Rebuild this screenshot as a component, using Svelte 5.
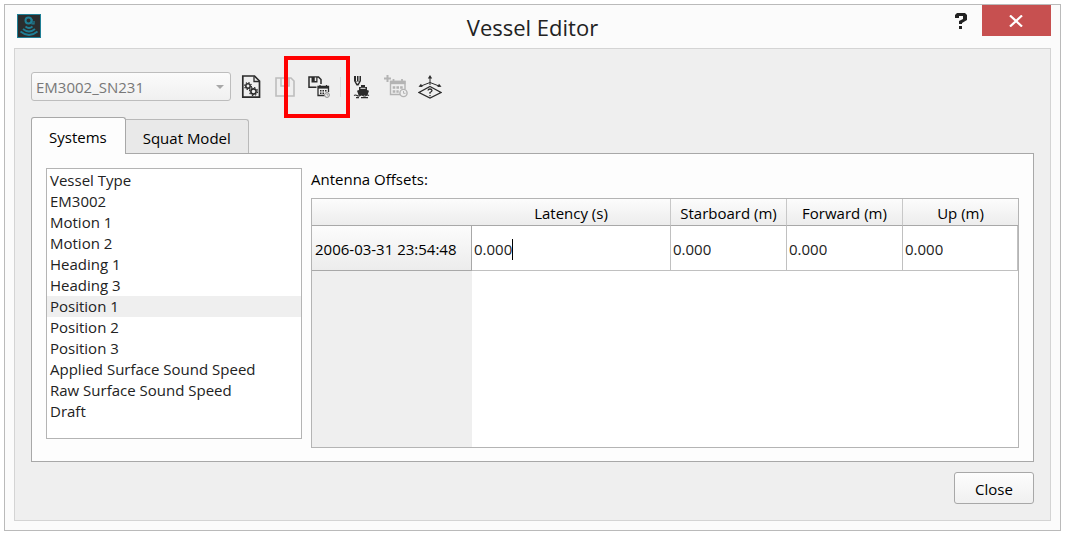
<script>
	const systems = [
		'Vessel Type',
		'EM3002',
		'Motion 1',
		'Motion 2',
		'Heading 1',
		'Heading 3',
		'Position 1',
		'Position 2',
		'Position 3',
		'Applied Surface Sound Speed',
		'Raw Surface Sound Speed',
		'Draft'
	];
	const tabs = ['Systems', 'Squat Model'];
	const columns = ['Latency (s)', 'Starboard (m)', 'Forward (m)', 'Up (m)'];

	let selected = $state('Position 1');
	let activeTab = $state('Systems');
	let editing = $state(0);
	let rows = $state([{ time: '2006-03-31 23:54:48', values: ['0.000', '0.000', '0.000', '0.000'] }]);
</script>

<div class="window">
	<header class="titlebar">
		<svg class="logo" width="24" height="24" viewBox="0 0 24 24" fill="none" stroke="#1f7f96">
			<rect x="0.5" y="0.5" width="23" height="23" fill="#2a2d2e" />
			<circle cx="11.5" cy="6.5" r="3" stroke-width="2" />
			<path d="M15 5v5h2V7" stroke-width="1.2" />
			<path d="M8.5 12.5q3.5 3 7 0M6 15q6 5 12 0M3.5 17.5q8.5 7 17 0" stroke-width="1.8" />
		</svg>
		<h1>Vessel Editor</h1>
		<div class="window-buttons">
			<button class="help" aria-label="Help">
				<svg width="12" height="16" viewBox="0 0 12 16" fill="#222">
					<path d="M2 0h8l2 2v5L7 10v1H4V8l4-2V3H4v2H0V2zM4 13h3v3H4z" />
				</svg>
			</button>
			<button class="close-window" aria-label="Close window">
				<svg width="14" height="12" viewBox="0 0 14 12" fill="none" stroke="#fff" stroke-width="2.2">
					<path d="M1 .5l12 11M13 .5l-12 11" />
				</svg>
			</button>
		</div>
	</header>

	<main>
		<div class="toolbar">
			<div class="combo">
				<select aria-label="Vessel configuration" disabled>
					<option>EM3002_SN231</option>
				</select>
			</div>

			<button class="tool" aria-label="Configuration settings">
				<svg width="20" height="24" viewBox="0 0 20 24" fill="none" stroke="#2b2b2b">
					<path d="M1.8 1h11.7l5 5v16.2H1.8z" stroke-width="1.7" />
					<path d="M13 1.5v5h5" stroke-width="1.3" />
					<circle cx="7" cy="11" r="2.2" stroke-width="1.5" />
					<circle cx="7" cy="11" r="3.4" stroke-width="1.2" stroke-dasharray="1.3 1.37" />
					<circle cx="12.5" cy="16.5" r="2.6" stroke-width="1.6" />
					<circle cx="12.5" cy="16.5" r="4" stroke-width="1.2" stroke-dasharray="1.5 1.64" />
				</svg>
			</button>

			<button class="tool" aria-label="Save" disabled>
				<svg width="20" height="20" viewBox="0 0 20 20" fill="none" stroke="#bdbdbd">
					<path d="M1 1h15l3 3v15H1z" stroke-width="1.6" />
					<path d="M6 1v8h8V1" stroke-width="1.5" />
					<path d="M11.5 2v5" stroke-width="2.5" />
				</svg>
			</button>

			<button class="tool marked" aria-label="Save as time entry">
				<svg width="22" height="22" viewBox="0 0 22 22" fill="none" stroke="#2b2b2b">
					<path d="M8.5 11.2H1V1h9.500l2.500 2.500V8" stroke-width="1.5" />
					<path d="M3.500 1h6v5.500h-6z" fill="#2b2b2b" stroke="none" />
					<path d="M7.500 1.5v3.500" stroke="#efefef" stroke-width="1.5" />
					<path d="M16.500 19.500H10V10.500h10.500V16" stroke-width="1.3" />
					<path d="M10 11.500h10.500" stroke-width="2.2" />
					<path d="M12 9v2M18.500 9v2" stroke-width="1.2" />
					<path d="M12 14.800h6.500M12 17.300h4.500" stroke-width="1.6" stroke-dasharray="1.5 1" />
					<circle cx="19" cy="19" r="2.400" fill="#efefef" stroke="#888" />
					<path d="M19 17.500v1.500h1.300" stroke="#888" stroke-width=".8" />
				</svg>
			</button>

			<span class="separator"></span>

			<button class="tool" aria-label="Edit vessel shape">
				<svg width="18" height="24" viewBox="0 0 18 24" fill="#2b2b2b">
					<path d="M1 1h2v5H1zM4 1h1.500v5H4zM6.500 1h1.500v5H6.500zM1 6h7L5.500 10.500h-2z" />
					<path d="M2.600 6.500h3.800L4.500 9z" fill="#efefef" />
					<path d="M8 10h4v2h2v3l2 .7-1.500 4.300H5.500L4 15.700l2-.7v-3h2z" />
					<path d="M7.500 13.300h5" stroke="#efefef" stroke-width="1" />
					<path d="M1 20.500q1.500-1 3 0t3 0 3 0 3 0 3 0M3 22.700h3M8 22.700h7" fill="none" stroke="#2b2b2b" stroke-width="1.2" />
				</svg>
			</button>

			<button class="tool" aria-label="Add time entry" disabled>
				<svg width="24" height="23" viewBox="0 0 24 23" fill="none" stroke="#b4b4b4">
					<path d="M3.500 0v7M0 3.500h7" stroke-width="2" />
					<path d="M16 19.500H6.500V6.500h14.500V14" stroke-width="1.4" />
					<path d="M6 7.500h15.500" stroke-width="3.4" />
					<path d="M9.500 4v3M18 4v3" stroke-width="1.8" />
					<path d="M8.700 12.500h10M8.700 16.500h6" stroke-width="2.6" stroke-dasharray="2.6 1.1" />
					<circle cx="19.500" cy="18" r="3.600" fill="#efefef" stroke-width="1.4" />
					<path d="M19.500 16v2.300h2" />
				</svg>
			</button>

			<button class="tool" aria-label="Reference frame">
				<svg width="24" height="24" viewBox="0 0 24 24" fill="none" stroke="#2b2b2b">
					<path d="M12 11.500L23 17.500L12 23L1 17.500z" stroke-width="1.2" />
					<path d="M12 10V2M12 7.500L2.500 11.200M12 7.500l9.500 3.700" />
					<path d="M12 0l2.200 3.500H9.800zM.5 11.800L3 8.800l1.700 3.200zM23.500 11.800L21 8.800l-1.700 3.200z" fill="#2b2b2b" stroke="none" />
					<path d="M10 15.500q.2-1.500 2-1.500t2 1.500q0 1-2 2v1.300M12 20v1.200" stroke-width="1.3" />
				</svg>
			</button>
		</div>

		<div class="tabs" role="tablist">
			{#each tabs as tab}
				<button
					class="tab"
					class:active={tab === activeTab}
					role="tab"
					aria-selected={tab === activeTab}
					onclick={() => (activeTab = tab)}>{tab}</button
				>
			{/each}
		</div>

		<div class="tab-panel" role="tabpanel">
			{#if activeTab === 'Systems'}
				<ul class="systems">
					{#each systems as name}
						<li>
							<button class:selected={name === selected} onclick={() => (selected = name)}>{name}</button>
						</li>
					{/each}
				</ul>

				<section class="offsets">
					<h2 id="offsets-title">Antenna Offsets:</h2>
					<div class="table-view">
						<table aria-labelledby="offsets-title">
							<thead>
								<tr>
									<td class="corner"></td>
									{#each columns as column}
										<th scope="col">{column}</th>
									{/each}
								</tr>
							</thead>
							<tbody>
								{#each rows as row}
									<tr>
										<th scope="row">{row.time}</th>
										{#each row.values as value, i}
											<td>
												<div class="cell">
													<input
														aria-label={columns[i]}
														bind:value={row.values[i]}
														onfocus={() => (editing = -1)}
														onblur={() => (editing = i)}
													/>
													{#if i === editing}<span class="caret"></span>{/if}
												</div>
											</td>
										{/each}
									</tr>
								{/each}
							</tbody>
						</table>
					</div>
				</section>
			{/if}
		</div>

		<footer>
			<button class="close">Close</button>
		</footer>
	</main>
</div>

<style>
	:global(body) {
		margin: 0;
		background: #fff;
	}

	.window,
	.window * {
		box-sizing: border-box;
	}

	.window {
		display: flex;
		flex-direction: column;
		min-height: calc(100vh - 7px);
		margin: 4px 4px 3px;
		padding: 0 9px 9px;
		border: 1px solid #bababa;
		background: #fbfbfb;
		color: #000;
		font-family: 'Segoe UI', 'Open Sans', 'Noto Sans', sans-serif;
		font-size: 15px;
		line-height: 21px;
	}

	button,
	input,
	select {
		font: inherit;
		color: inherit;
	}

	.titlebar {
		display: grid;
		grid-template-columns: 1fr auto 1fr;
		height: 43px;
	}

	.logo {
		margin: 9px 0 0 3px;
	}

	h1 {
		margin: 0;
		color: #222;
		font-size: 22px;
		font-weight: 400;
		line-height: 44px;
	}

	.window-buttons {
		display: flex;
		justify-content: flex-end;
		align-items: flex-start;
	}

	.window-buttons button {
		display: flex;
		align-items: center;
		justify-content: center;
		height: 31px;
		padding: 0;
		border: none;
		background: none;
	}

	.window-buttons .help {
		width: 42px;
	}

	.window-buttons .close-window {
		width: 69px;
		padding-right: 2px;
		background: #c75050;
	}

	main {
		display: flex;
		flex: 1;
		flex-direction: column;
		padding: 23px 16px 16px;
		border: 1px solid #d4d4d4;
		background: #efefef;
	}

	.toolbar {
		display: flex;
		align-items: center;
		height: 29px;
		margin-bottom: 16px;
	}

	.combo {
		position: relative;
		width: 200px;
		margin-right: 5px;
	}

	.combo::after {
		content: '';
		position: absolute;
		top: 13px;
		right: 7px;
		border: 4px solid transparent;
		border-top-color: #a8a8a8;
		border-bottom: none;
	}

	select {
		appearance: none;
		display: block;
		width: 100%;
		height: 29px;
		padding: 2px 4px 0;
		border: 1px solid #bdbdbd;
		border-radius: 3px;
		background: linear-gradient(#fbfbfb, #f0f0f0);
		color: #787878;
		opacity: 1;
	}

	.tool {
		position: relative;
		display: flex;
		align-items: center;
		justify-content: center;
		width: 30px;
		height: 28px;
		margin-right: 4px;
		padding: 0;
		border: none;
		background: none;
	}

	/* highlight drawn over the neighbouring icons */
	.marked::after {
		content: '';
		position: absolute;
		z-index: 1;
		inset: -17px -16px -17px -20px;
		border: 4px solid #f00;
		pointer-events: none;
	}

	.separator {
		width: 1px;
		height: 20px;
		margin: 0 6px 0 2px;
		background: #dcdcdc;
	}

	.tabs {
		display: flex;
		align-items: flex-end;
	}

	.tab {
		height: 34px;
		padding: 4px 17px 0;
		border: 1px solid #b9b9b9;
		border-bottom: none;
		border-left: none;
		border-radius: 0 3px 0 0;
		background: #e9e9e9;
	}

	.tab.active {
		position: relative;
		height: 37px;
		margin-bottom: -1px;
		padding: 2px 18px 0 17px;
		border: 1px solid #a8a8a8;
		border-bottom: none;
		border-radius: 3px 3px 0 0;
		background: #fdfdfd;
	}

	.tab-panel {
		display: flex;
		flex: 1;
		gap: 9px;
		padding: 14px 14px 13px;
		border: 1px solid #a8a8a8;
		background: #fdfdfd;
	}

	.systems {
		flex: 0 0 256px;
		align-self: flex-start;
		height: 271px;
		margin: 0;
		padding: 1px 0;
		border: 1px solid #b4b4b4;
		background: #fff;
		list-style: none;
	}

	.systems button {
		display: block;
		width: 100%;
		height: 21px;
		padding: 0 3px;
		border: none;
		background: none;
		color: #222;
		text-align: left;
	}

	.systems .selected {
		background: #efefef;
	}

	.offsets {
		display: flex;
		flex: 1;
		flex-direction: column;
	}

	h2 {
		margin: 1px 0 8px;
		font-size: 15px;
		font-weight: 400;
		line-height: 21px;
	}

	/* the grey strip continues the row header below the last row */
	.table-view {
		flex: 1;
		border: 1px solid #b4b4b4;
		background: linear-gradient(#efefef, #efefef) left / 160px 100% no-repeat #fff;
	}

	table {
		width: 100%;
		border-collapse: separate;
		border-spacing: 0;
		table-layout: fixed;
	}

	th,
	td {
		padding: 0;
		font-weight: 400;
	}

	thead tr {
		height: 27px;
		background: linear-gradient(#fcfcfc, #ececec);
	}

	thead th,
	.corner {
		width: 116px;
		padding-top: 2px;
		border-bottom: 1px solid #a8a8a8;
	}

	.corner {
		width: 160px;
	}

	thead th:nth-child(2) {
		width: auto;
	}

	thead th:nth-child(n + 3) {
		border-left: 1px solid #c8c8c8;
	}

	tbody tr {
		height: 45px;
	}

	tbody th {
		padding: 2px 0 0 3px;
		border-right: 1px solid #a8a8a8;
		border-bottom: 1px solid #a8a8a8;
		background: linear-gradient(#fcfcfc, #ececec);
		text-align: left;
		white-space: nowrap;
	}

	tbody td {
		padding-top: 2px;
		border-bottom: 1px solid #c0c0c0;
		border-left: 1px solid #c0c0c0;
		background: #fff;
	}

	tbody th + td {
		border-left: none;
	}

	tbody td:last-child {
		border-right: 1px solid #c0c0c0;
	}

	.cell {
		display: flex;
		align-items: center;
		padding-left: 2px;
		color: #222;
	}

	.cell input {
		field-sizing: content;
		max-width: 100%;
		padding: 0;
		border: none;
		outline: none;
		background: none;
	}

	.caret {
		width: 1px;
		height: 21px;
		background: #000;
	}

	footer {
		display: flex;
		justify-content: flex-end;
		padding-top: 10px;
	}

	.close {
		width: 80px;
		height: 32px;
		padding: 2px 0 0;
		border: 1px solid #a8a8a8;
		border-radius: 3px;
		background: linear-gradient(#fdfdfd, #f0f0f0);
	}
</style>
